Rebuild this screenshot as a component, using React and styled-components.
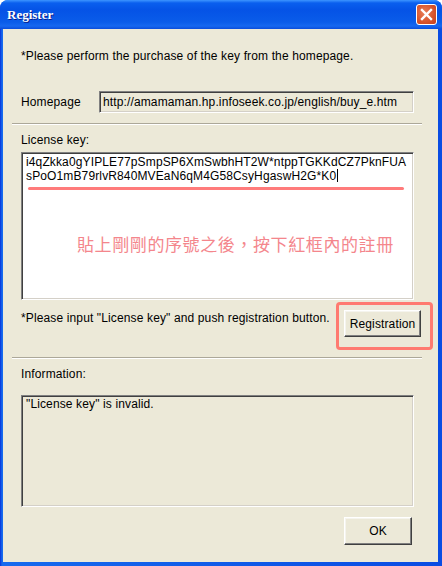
import styled, { createGlobalStyle } from "styled-components";

const GlobalStyle = createGlobalStyle`
  html, body {
    margin: 0;
    padding: 0;
    background: #ffffff;
  }
`;

const Window = styled.div`
  width: 442px;
  height: 566px;
  display: flex;
  flex-direction: column;
  background: linear-gradient(to right, #0831d9 0px, #166aee 2px, #0a4ce3 100%);
  border-radius: 8px 8px 0 0;
  overflow: hidden;
  font-family: "Liberation Sans", Arial, sans-serif;
  font-size: 12px;
  letter-spacing: 0.13px;
  color: #000;
`;

const TitleBar = styled.div`
  height: 29px;
  flex-shrink: 0;
  display: flex;
  align-items: center;
  justify-content: space-between;
  padding: 0 5px 0 7px;
  background: linear-gradient(
    to bottom,
    #3d95ff 0px,
    #0a5fee 3px,
    #0553e6 10px,
    #0a5ce9 22px,
    #1668f0 26px,
    #0a4ddb 29px
  );
`;

const Title = styled.span`
  font-family: "Liberation Serif", "Times New Roman", serif;
  font-weight: bold;
  font-size: 13px;
  letter-spacing: 0;
  color: #fff;
  text-shadow: 1px 1px 0 #0a1e8a;
  margin-top: 1px;
`;

const CloseButton = styled.div`
  width: 19px;
  height: 19px;
  border: 1px solid #fff;
  border-radius: 3px;
  display: flex;
  align-items: center;
  justify-content: center;
  background: radial-gradient(circle at 40% 40%, #e8805a 0%, #d8532a 60%, #c4401c 100%);
`;

const Body = styled.div`
  flex: 1;
  margin: 0 4px 4px 3px;
  background: #ece9d8;
  padding: 20px 24px 0 18px;
  display: flex;
  flex-direction: column;
`;

const Line = styled.div`
  line-height: 14px;
  height: 14px;
  white-space: nowrap;
  margin-top: ${(p) => p.$top || 0}px;
`;

const FieldRow = styled.div`
  display: flex;
  align-items: center;
  margin-top: ${(p) => p.$top || 0}px;
`;

const FieldLabel = styled.span`
  width: 78px;
  line-height: 14px;
`;

const ReadOnlyField = styled.div`
  flex: 1;
  height: 22px;
  box-sizing: border-box;
  border-style: solid;
  border-width: 1px;
  border-color: #808080 #ffffff #ffffff #808080;
  box-shadow: inset 1px 1px 0 #404040, inset -1px -1px 0 #d4d0c8;
  background: #ece9d8;
  padding: 3px 0 0 3px;
  line-height: 14px;
  white-space: nowrap;
  overflow: hidden;
`;

const Separator = styled.div`
  height: 1px;
  background: #aca899;
  border-bottom: 1px solid #ffffff;
  margin: ${(p) => p.$top || 0}px -8px 0 -9px;
`;

const Box = styled.div`
  height: ${(p) => p.$height}px;
  flex-shrink: 0;
  box-sizing: border-box;
  border-style: solid;
  border-width: 1px;
  border-color: #808080 #ffffff #ffffff #808080;
  box-shadow: inset 1px 1px 0 #404040, inset -1px -1px 0 #d4d0c8;
  background: ${(p) => (p.$white ? "#ffffff" : "#ece9d8")};
  padding: ${(p) => (p.$white ? "2px 4px" : "1px 4px")};
  margin-top: ${(p) => p.$top || 0}px;
`;

const KeyText = styled.div`
  line-height: 14px;
  white-space: nowrap;
`;

const Caret = styled.span`
  display: inline-block;
  width: 1px;
  height: 13px;
  background: #000;
  vertical-align: -2px;
  margin-left: 1px;
`;

const Underline = styled.div`
  width: 376px;
  height: 3px;
  border-radius: 2px;
  background: #ff7b7b;
  margin: 4px 0 0 2px;
`;

const Note = styled.div`
  font-family: "Noto Sans CJK TC", "Noto Sans CJK SC", sans-serif;
  font-size: 17px;
  line-height: 20px;
  color: #f4868c;
  margin: 44px 0 0 51px;
  white-space: nowrap;
  letter-spacing: 0.6px;
`;

const ActionRow = styled.div`
  display: flex;
  justify-content: space-between;
  align-items: flex-start;
  margin: 2px -19px 0 0;
`;

const Highlight = styled.div`
  border: 3px solid #ff7a70;
  border-radius: 4px;
  padding: 5px 9px 10px 5px;
`;

const Button = styled.button`
  width: ${(p) => p.$width}px;
  height: ${(p) => p.$height}px;
  box-sizing: border-box;
  background: #ece9d8;
  border-style: solid;
  border-width: 1px;
  border-color: #ffffff #404040 #404040 #ffffff;
  box-shadow: inset -1px -1px 0 #808080, inset 1px 1px 0 #f5f4ee;
  font-family: "Liberation Sans", Arial, sans-serif;
  font-size: 12px;
  letter-spacing: 0.13px;
  color: #000;
  padding: 0;
`;

const Footer = styled.div`
  display: flex;
  justify-content: flex-end;
  margin: 10px 2px 0 0;
`;

const App = () => {
  return (
    <>
      <GlobalStyle />
      <Window>
        <TitleBar>
          <Title>Register</Title>
          <CloseButton>
            <svg width="13" height="13" viewBox="0 0 13 13">
              <path d="M2 2 L11 11 M11 2 L2 11" stroke="#fff" strokeWidth="2.4" strokeLinecap="square" />
            </svg>
          </CloseButton>
        </TitleBar>
        <Body>
          <Line>*Please perform the purchase of the key from the homepage.</Line>
          <FieldRow $top={28}>
            <FieldLabel>Homepage</FieldLabel>
            <ReadOnlyField>http://amamaman.hp.infoseek.co.jp/english/buy_e.htm</ReadOnlyField>
          </FieldRow>
          <Separator $top={10} />
          <Line $top={8}>License key:</Line>
          <Box $white $height={148} $top={5}>
            <KeyText>i4qZkka0gYIPLE77pSmpSP6XmSwbhHT2W*ntppTGKKdCZ7PknFUA</KeyText>
            <KeyText>
              sPoO1mB79rlvR840MVEaN6qM4G58CsyHgaswH2G*K0
              <Caret />
            </KeyText>
            <Underline />
            <Note>貼上剛剛的序號之後，按下紅框內的註冊</Note>
          </Box>
          <ActionRow>
            <Line $top={9}>*Please input "License key" and push registration button.</Line>
            <Highlight>
              <Button $width={77} $height={27}>Registration</Button>
            </Highlight>
          </ActionRow>
          <Separator $top={7} />
          <Line $top={8}>Information:</Line>
          <Box $height={112} $top={14}>
            <KeyText>"License key" is invalid.</KeyText>
          </Box>
          <Footer>
            <Button $width={68} $height={28}>OK</Button>
          </Footer>
        </Body>
      </Window>
    </>
  );
};

export default App;
